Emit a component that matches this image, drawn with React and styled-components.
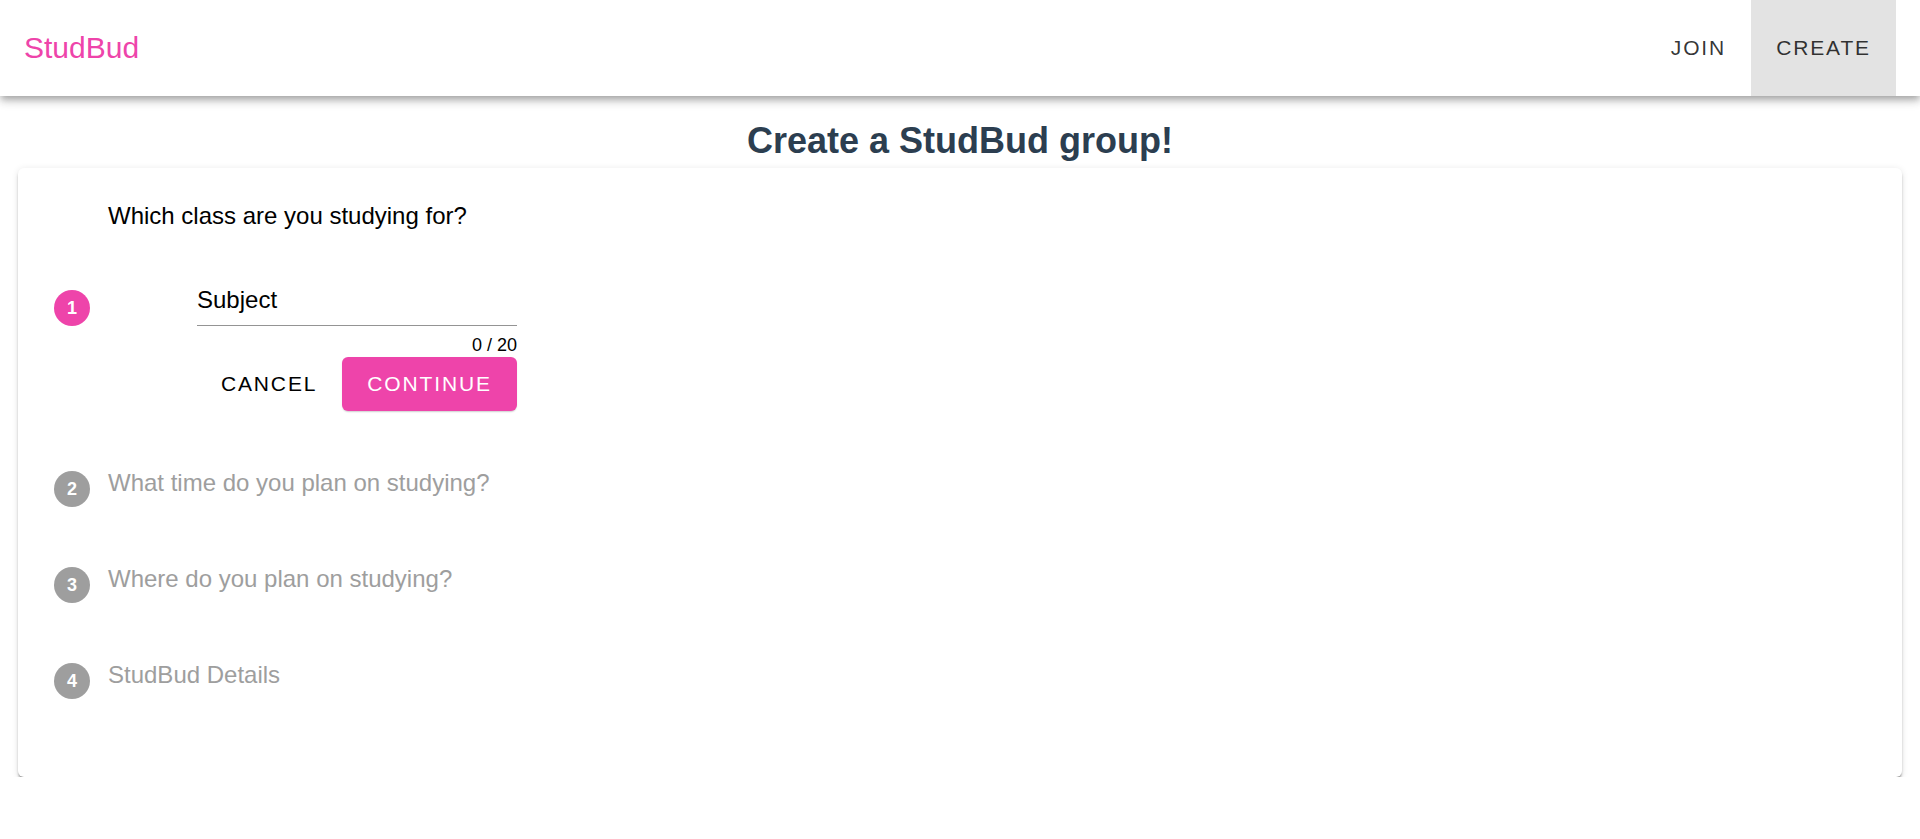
import React from "react";
import styled, { createGlobalStyle } from "styled-components";

const PINK = "#ee44aa";
const GREY = "#9e9e9e";

const Global = createGlobalStyle`
  html, body { margin: 0; padding: 0; background: #fff; }
  body {
    font-family: "Liberation Sans", Arial, Helvetica, sans-serif;
    color: rgba(0, 0, 0, 0.87);
  }
  * { box-sizing: border-box; }
`;

const Header = styled.header`
  position: relative;
  z-index: 2;
  height: 96px;
  display: flex;
  align-items: center;
  justify-content: space-between;
  padding: 0 24px;
  background: #fff;
  box-shadow: 0 3px 6px -1.5px rgba(0, 0, 0, 0.2),
    0 6px 7.5px 0 rgba(0, 0, 0, 0.14), 0 1.5px 15px 0 rgba(0, 0, 0, 0.12);
`;

const Brand = styled.div`
  font-size: 30px;
  line-height: 36px;
  color: ${PINK};
`;

const Nav = styled.nav`
  display: flex;
  height: 100%;
`;

const NavButton = styled.button`
  height: 100%;
  border: 0;
  margin: 0;
  padding: 0 25px;
  font-family: inherit;
  font-size: 21px;
  letter-spacing: 0.0893em;
  text-transform: uppercase;
  color: rgba(0, 0, 0, 0.8);
  background: ${(p) => (p.$active ? "#e3e3e3" : "transparent")};
  cursor: pointer;
`;

const Main = styled.main`
  display: flex;
  flex-direction: column;
`;

const Title = styled.h2`
  margin: 24px 0 0;
  font-size: 36px;
  line-height: 42px;
  font-weight: bold;
  text-align: center;
  color: #2c3e50;
`;

const Card = styled.section`
  margin: 6px 18px 0;
  padding: 30px 0 54px;
  background: #fff;
  border-radius: 6px;
  box-shadow: 0 3px 2px -1px rgba(0, 0, 0, 0.3),
    0 3px 3px 0 rgba(0, 0, 0, 0.14), 0 1.5px 7.5px 0 rgba(0, 0, 0, 0.1);
`;

const Question = styled.div`
  margin-left: 90px;
  font-size: 24px;
  line-height: 36px;
  color: #000;
`;

const ActiveRow = styled.div`
  display: flex;
  align-items: flex-start;
  margin-top: 53px;
  padding-left: 36px;
`;

const StepCircle = styled.div`
  flex: none;
  width: 36px;
  height: 36px;
  margin-top: ${(p) => p.$offset || 0}px;
  border-radius: 50%;
  background: ${(p) => (p.$active ? PINK : GREY)};
  color: #fff;
  font-size: 18px;
  font-weight: bold;
  display: flex;
  align-items: center;
  justify-content: center;
`;

const Content = styled.div`
  margin-left: 107px;
  width: 320px;
  display: flex;
  flex-direction: column;
`;

const Field = styled.input`
  display: block;
  width: 100%;
  height: 39px;
  margin: 0;
  padding: 1px 0 13px;
  border: 0;
  border-bottom: 1px solid #949494;
  outline: none;
  background: transparent;
  font-family: inherit;
  font-size: 24px;
  line-height: 24px;
  color: rgba(0, 0, 0, 0.87);
  &::placeholder {
    color: #000;
    opacity: 1;
  }
`;

const Counter = styled.div`
  margin-top: 7px;
  text-align: right;
  font-size: 18px;
  line-height: 24px;
  color: #000;
`;

const Actions = styled.div`
  display: flex;
  justify-content: flex-end;
`;

const ActionButton = styled.button`
  height: 54px;
  margin: 0;
  padding: 0 25px;
  border: 0;
  border-radius: 6px;
  font-family: inherit;
  font-size: 21px;
  letter-spacing: 0.0893em;
  text-transform: uppercase;
  cursor: pointer;
  color: ${(p) => (p.$primary ? "#fff" : "#000")};
  background: ${(p) => (p.$primary ? PINK : "transparent")};
  box-shadow: ${(p) =>
    p.$primary
      ? "0 1.5px 1.5px -1px rgba(0,0,0,.12), 0 1px 2px 0 rgba(0,0,0,.08)"
      : "none"};
`;

const Steps = styled.div`
  margin-top: 24px;
  display: flex;
  flex-direction: column;
`;

const StepHeader = styled.div`
  display: flex;
  align-items: flex-start;
  gap: 18px;
  height: 96px;
  padding: 36px 0 24px 36px;
`;

const StepLabel = styled.div`
  font-size: 24px;
  line-height: 24px;
  color: ${GREY};
`;

const pending = [
  { n: 2, label: "What time do you plan on studying?" },
  { n: 3, label: "Where do you plan on studying?" },
  { n: 4, label: "StudBud Details" },
];

export default function App() {
  return (
    <>
      <Global />
      <Header>
        <Brand>StudBud</Brand>
        <Nav>
          <NavButton>Join</NavButton>
          <NavButton $active>Create</NavButton>
        </Nav>
      </Header>
      <Main>
        <Title>Create a StudBud group!</Title>
        <Card>
          <Question>Which class are you studying for?</Question>
          <ActiveRow>
            <StepCircle $active $offset={3}>1</StepCircle>
            <Content>
              <Field placeholder="Subject" maxLength={20} />
              <Counter>0 / 20</Counter>
              <Actions>
                <ActionButton>Cancel</ActionButton>
                <ActionButton $primary>Continue</ActionButton>
              </Actions>
            </Content>
          </ActiveRow>
          <Steps>
            {pending.map((s) => (
              <StepHeader key={s.n}>
                <StepCircle>{s.n}</StepCircle>
                <StepLabel>{s.label}</StepLabel>
              </StepHeader>
            ))}
          </Steps>
        </Card>
      </Main>
    </>
  );
}
